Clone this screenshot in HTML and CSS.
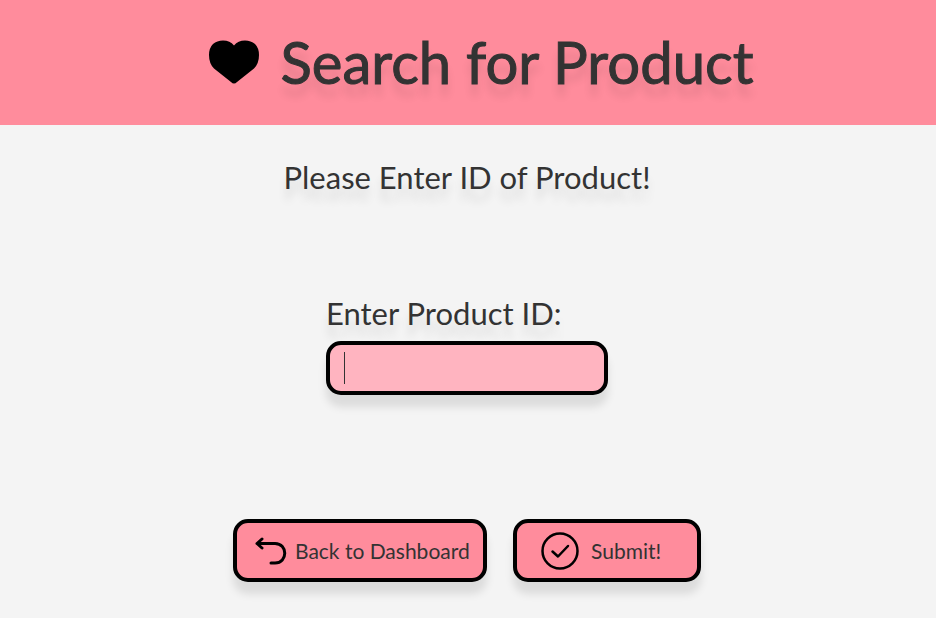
FILE: index.html
```html
<!DOCTYPE html>
<html lang="en">
<head>
<meta charset="utf-8">
<title>Search for Product</title>
<link rel="stylesheet" href="styles.css">
</head>
<body>
<header class="banner">
  <svg class="heart" viewBox="0 0 50 44" aria-hidden="true"><path d="M25 43.500Q23.500 43.500 22 42L5 28.500Q0 23.500 0 15Q0 8 4 4Q8 .5 14 .5Q21 .5 25 5.500Q29 .5 36 .5Q42 .5 46 4Q50 8 50 15Q50 23.500 45 28.500L28 42Q26.500 43.500 25 43.500Z"/></svg>
  <h1>Search for Product</h1>
</header>
<main>
  <p class="intro">Please Enter ID of Product!</p>
  <form class="search">
    <div class="field">
      <label for="product-id">Enter Product ID:</label>
      <div class="entry">
        <input id="product-id" type="text" autocomplete="off">
        <span class="caret"></span>
      </div>
    </div>
    <div class="actions">
      <button class="back" type="button">
        <svg class="return-icon" viewBox="0 0 32 28" aria-hidden="true"><path d="M7 2L2 6.500L7 11M2 6.500H20C33 6.500 33 26 20 26H16"/></svg>
        <span>Back to Dashboard</span>
      </button>
      <button class="submit" type="submit">
        <svg class="check-icon" viewBox="0 0 38 38" aria-hidden="true"><circle cx="19" cy="19" r="17.500"/><path d="M11.500 19.500L17 24.500L27 14"/></svg>
        <span>Submit!</span>
      </button>
    </div>
  </form>
</main>
</body>
</html>
```
FILE: styles.css
```css
* {
  box-sizing: border-box;
}

body {
  min-height: 100vh;
  margin: 0;
  background: #f4f4f4;
  color: #333;
  font-family: Lato, "Open Sans", sans-serif;
}

.banner {
  display: flex;
  align-items: center;
  justify-content: center;
  gap: 22px;
  padding: 26px 0 27px 26px;
  background: #ff8c9c;
}

.heart {
  width: 50px;
  height: 44px;
}

h1 {
  margin: 0;
  font-size: 58px;
  font-weight: 400;
  line-height: 72px;
  -webkit-text-stroke: 1px #333;
  text-shadow: 0 12px 8px rgba(0, 0, 0, 0.1);
}

main {
  padding: 32px 2px 32px 0;
}

.intro {
  margin: 0;
  font-size: 31px;
  line-height: 40px;
  text-align: center;
  text-shadow: 0 12px 8px rgba(0, 0, 0, 0.1);
}

.search {
  display: flex;
  flex-direction: column;
  align-items: center;
}

.field {
  width: 282px;
  margin-top: 96px;
}

label {
  display: block;
  margin-bottom: 8px;
  font-size: 31px;
  line-height: 40px;
  white-space: nowrap;
  text-shadow: 0 12px 8px rgba(0, 0, 0, 0.1);
}

.entry {
  position: relative;
}

input {
  display: block;
  width: 100%;
  height: 54px;
  padding: 0 14px;
  border: 4px solid #000;
  border-radius: 15px;
  outline: none;
  background: #ffb4c0;
  color: #333;
  font: inherit;
  font-size: 28px;
  box-shadow: 0 12px 8px rgba(0, 0, 0, 0.1);
}

.caret {
  position: absolute;
  top: 11px;
  left: 18px;
  width: 1px;
  height: 32px;
  background: #333;
}

.actions {
  display: flex;
  gap: 26px;
  margin-top: 124px;
}

button {
  display: flex;
  align-items: center;
  height: 63px;
  border: 4px solid #000;
  border-radius: 15px;
  background: #ff8c9c;
  color: #333;
  font: inherit;
  font-size: 21px;
  white-space: nowrap;
  box-shadow: 0 12px 8px rgba(0, 0, 0, 0.1);
}

.back {
  gap: 8px;
  width: 254px;
  padding: 0 0 0 18px;
}

.submit {
  gap: 12px;
  width: 188px;
  padding: 0 0 0 24px;
}

.return-icon,
.check-icon {
  fill: none;
  stroke: #000;
  stroke-linecap: round;
  stroke-linejoin: round;
}

.return-icon {
  width: 32px;
  height: 28px;
  stroke-width: 3;
}

.check-icon {
  width: 38px;
  height: 38px;
  stroke-width: 2.5;
}
```
